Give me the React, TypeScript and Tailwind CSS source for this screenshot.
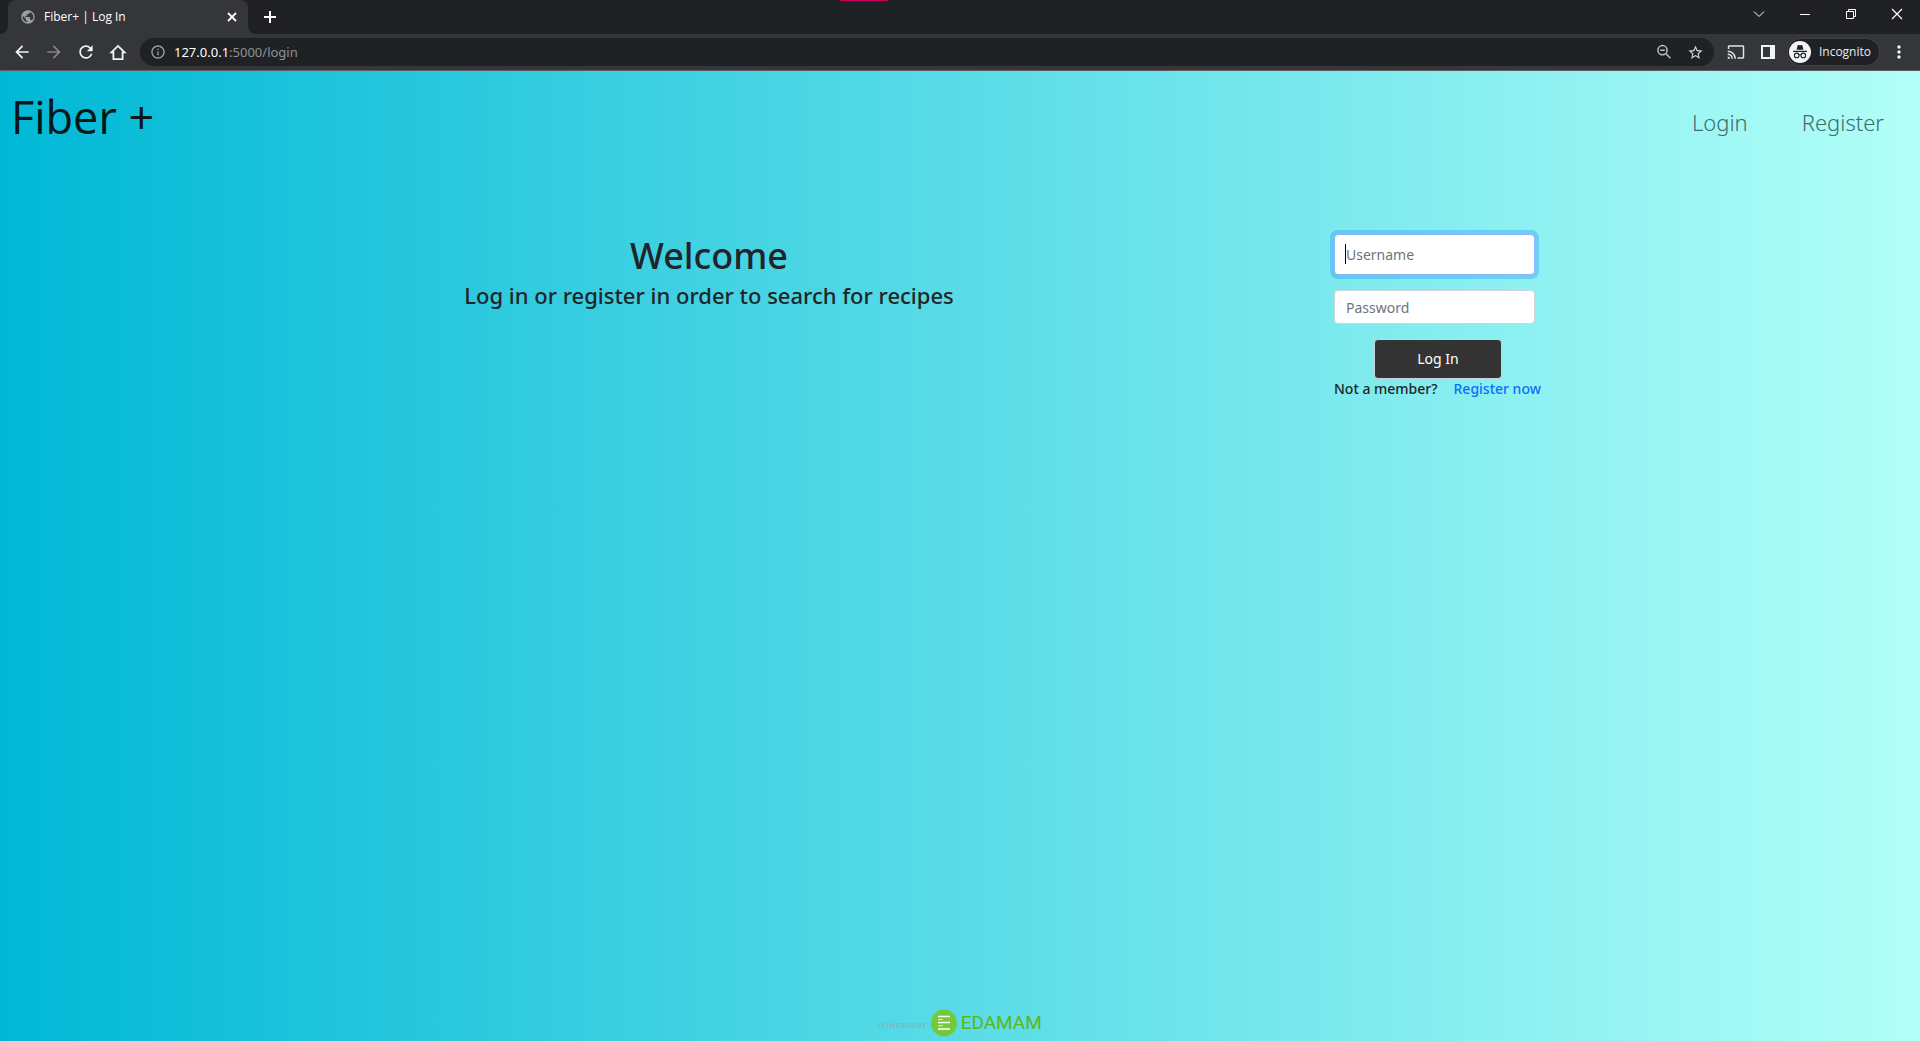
import type { ReactNode } from "react";
import {
  MdArrowBack,
  MdArrowForward,
  MdCast,
  MdInfoOutline,
  MdMoreVert,
  MdPublic,
  MdRefresh,
  MdStarBorder,
} from "react-icons/md";

function IconButton({ label, className = "", children }: { label: string; className?: string; children: ReactNode }) {
  return (
    <button type="button" aria-label={label} className={`flex shrink-0 items-center justify-center ${className}`}>
      {children}
    </button>
  );
}

function TabStrip() {
  return (
    <div className="relative flex h-[34px] bg-[#202124] text-white">
      <div className="absolute left-1/2 top-0 -ml-[120px] h-px w-12 bg-[#c8005a]" />
      <div className="w-2 bg-[#35363a]">
        <div className="h-full w-full rounded-br-lg bg-[#202124]" />
      </div>
      <div className="flex w-60 items-center rounded-t-lg bg-[#35363a] pl-3 pr-2.5">
        <MdPublic className="size-4 text-[#9aa0a6]" />
        <span className="ml-2 flex-1 font-['Open_Sans'] text-xs">Fiber+ | Log In</span>
        <IconButton label="Close tab" className="size-3">
          <svg viewBox="0 0 12 12" className="size-3" stroke="currentColor" strokeWidth="1.8">
            <path d="M2 2l8 8M10 2l-8 8" />
          </svg>
        </IconButton>
      </div>
      <div className="w-2 bg-[#35363a]">
        <div className="h-full w-full rounded-bl-lg bg-[#202124]" />
      </div>
      <IconButton label="New tab" className="ml-2 w-3">
        <svg viewBox="0 0 12 12" className="size-3" stroke="currentColor" strokeWidth="2">
          <path d="M6 0v12M0 6h12" />
        </svg>
      </IconButton>
      <div className="ml-auto flex h-7">
        <IconButton label="Search tabs" className="w-[46px]">
          <svg viewBox="0 0 12 12" className="size-3" fill="none" stroke="currentColor">
            <path d="M1 3.5l5 5 5-5" />
          </svg>
        </IconButton>
        <IconButton label="Minimize" className="w-[46px]">
          <svg viewBox="0 0 12 12" className="size-3" fill="none" stroke="currentColor">
            <path d="M1 6.5h10" />
          </svg>
        </IconButton>
        <IconButton label="Restore" className="w-[46px]">
          <svg viewBox="0 0 12 12" className="size-3" fill="none" stroke="currentColor">
            <path d="M1.5 3.5h7v7h-7zM3.5 3.5v-2h7v7h-2" />
          </svg>
        </IconButton>
        <IconButton label="Close" className="w-[46px]">
          <svg viewBox="0 0 12 12" className="size-3" fill="none" stroke="currentColor" strokeWidth="1.2">
            <path d="M1 1l10 10M11 1L1 11" />
          </svg>
        </IconButton>
      </div>
    </div>
  );
}

function Toolbar() {
  return (
    <div className="flex h-9 items-center bg-[#35363a] pl-3 pr-[11px] text-[#f1f3f4]">
      <div className="flex gap-3">
        <IconButton label="Back" className="size-5"><MdArrowBack className="size-5" /></IconButton>
        <IconButton label="Forward" className="size-5 text-[#86878a]"><MdArrowForward className="size-5" /></IconButton>
        <IconButton label="Reload" className="size-5"><MdRefresh className="size-5" /></IconButton>
        <IconButton label="Home" className="size-5">
          <svg viewBox="0 0 20 20" className="size-5" fill="none" stroke="currentColor" strokeWidth="1.8">
            <path d="M3.4 10.4h2v6.7h9.2v-6.7h2L10 3.9z" />
          </svg>
        </IconButton>
      </div>
      <div className="ml-3 flex h-7 flex-1 items-center rounded-full bg-[#202124] pl-2.5 pr-2 text-[#9aa0a6]">
        <MdInfoOutline className="size-4" />
        <span className="ml-2 flex-1 font-['Noto_Sans'] text-[13px] leading-5 text-[#8e9297]">
          <span className="text-white">127.0.0.1</span>:5000/login
        </span>
        <div className="flex gap-3">
          <IconButton label="Zoom" className="size-5 text-[#bdc1c6]">
            <svg viewBox="0 0 20 20" className="size-5" fill="none" stroke="currentColor" strokeWidth="1.5">
              <circle cx="8.5" cy="8.2" r="4.6" />
              <path d="M12 11.8l4.4 4.4M6.2 8.2h4.6" />
            </svg>
          </IconButton>
          <IconButton label="Bookmark" className="size-5 text-[#d0d3d7]"><MdStarBorder className="size-[17px]" /></IconButton>
        </div>
      </div>
      <div className="flex items-center pl-3">
        <IconButton label="Cast" className="size-5 text-[#dfe1e5]"><MdCast className="size-[18px]" /></IconButton>
        <IconButton label="Side panel" className="ml-3 size-5">
          <svg viewBox="0 0 14 14" className="size-3.5" fill="currentColor" fillRule="evenodd">
            <path d="M0 0h14v14H0zM2 2v10h7V2z" />
          </svg>
        </IconButton>
        <button type="button" className="ml-2.5 flex h-[26px] items-center rounded-full bg-[#202124] pl-px pr-2 ring-1 ring-[#3e3f43]">
          <svg viewBox="0 0 22 22" className="size-[22px]">
            <circle cx="11" cy="11" r="11" fill="#f1f3f4" />
            <g fill="#202124">
              <path d="M7.6 8.8l1-4.3c.1-.4.5-.6.9-.4.9.3 2.1.3 3 0 .4-.2.8 0 .9.4l1 4.3z" />
              <path d="M4 9.8h14v1.2H4z" />
            </g>
            <g fill="none" stroke="#202124" strokeWidth="1.1">
              <circle cx="7.7" cy="14.4" r="2.3" />
              <circle cx="14.3" cy="14.4" r="2.3" />
              <path d="M10 14.2c.6-.5 1.4-.5 2 0" />
            </g>
          </svg>
          <span className="ml-2 font-['Open_Sans'] text-xs text-[#e8eaed]">Incognito</span>
        </button>
        <IconButton label="Menu" className="ml-2.5 size-5"><MdMoreVert className="size-5" /></IconButton>
      </div>
    </div>
  );
}

export default function App() {
  return (
    <div className="flex min-h-screen flex-col font-['Noto_Sans',sans-serif] text-[#212529]">
      <TabStrip />
      <Toolbar />
      <div className="flex flex-1 flex-col border-t border-[#5b5c5f] bg-linear-to-r/srgb from-[#00b8d6] to-[#b2fff8] bg-origin-border">
        <nav className="flex items-center justify-between pl-[11px] pr-9 pt-[15px]">
          <a href="#home" className="font-['Open_Sans'] text-[45px] leading-[62px] text-[#081618]">Fiber +</a>
          <div className="flex gap-[54px] pt-2.5 text-[22px] font-light leading-8 text-[#3f6b6b]">
            <a href="#login">Login</a>
            <a href="#register">Register</a>
          </div>
        </nav>
        <main className="mx-auto flex w-full max-w-[1188px] justify-between pr-[19px] pt-[86px]">
          <div className="w-[686px] text-center font-medium">
            <h1 className="text-4xl leading-[43px]">Welcome</h1>
            <h2 className="mt-1 text-[22px] leading-7">Log in or register in order to search for recipes</h2>
          </div>
          <form className="w-[201px] text-sm" onSubmit={(e) => e.preventDefault()}>
            <div className="relative">
              <input
                aria-label="Username"
                placeholder="Username"
                className="block h-[41px] w-full rounded-[4px] border border-[#86b7fe] bg-white px-[11px] outline-none ring-4 ring-[#0d6efd]/25 placeholder:text-[#6c757d]"
              />
              <span className="absolute left-[11px] top-2.5 h-5 w-px bg-black" />
            </div>
            <input
              aria-label="Password"
              type="password"
              placeholder="Password"
              className="mt-[15px] block h-[34px] w-full rounded-[4px] border border-[#ced4da] bg-white px-[11px] outline-none placeholder:text-[#6c757d]"
            />
            <button type="submit" className="ml-10 mt-[15px] block h-10 w-32 rounded-[4px] border border-[#ced4da] bg-[#333] text-white">
              Log In
            </button>
            <p className="flex gap-4 whitespace-nowrap font-medium leading-5">
              Not a member?
              <a href="#register" className="text-[#0d6efd]">Register now</a>
            </p>
          </form>
        </main>
        <footer className="mt-auto flex justify-center pb-1">
          <a href="#edamam" className="flex items-center">
            <span className="mr-1 mt-1.5 font-['Roboto'] text-[8px] leading-3 text-[#93adae]">POWERED BY</span>
            <svg viewBox="0 0 26 28" className="h-7 w-[26px]">
              <ellipse cx="13" cy="14" rx="13" ry="13.5" fill="#76c83a" />
              <path d="M7 7.5h12M7 13.5h12M7 20h12" stroke="#fff" strokeWidth="1.3" />
              <path d="M7 10.5h5M7 16.8h5" stroke="#d9f0c8" strokeWidth="1" />
            </svg>
            <span className="ml-1 font-['Roboto'] text-[19px] leading-7 text-[#5cb615]">EDAMAM</span>
          </a>
        </footer>
      </div>
    </div>
  );
}
